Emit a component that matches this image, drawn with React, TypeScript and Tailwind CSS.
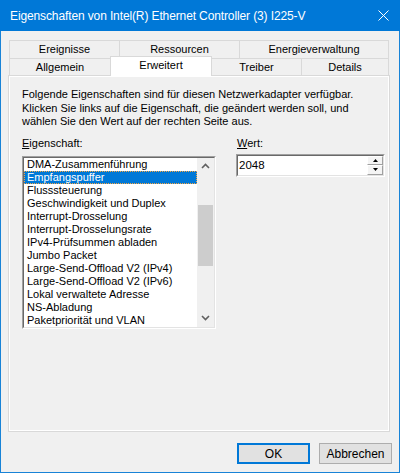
const properties = [
  'DMA-Zusammenführung',
  'Empfangspuffer',
  'Flusssteuerung',
  'Geschwindigkeit und Duplex',
  'Interrupt-Drosselung',
  'Interrupt-Drosselungsrate',
  'IPv4-Prüfsummen abladen',
  'Jumbo Packet',
  'Large-Send-Offload V2 (IPv4)',
  'Large-Send-Offload V2 (IPv6)',
  'Lokal verwaltete Adresse',
  'NS-Abladung',
  'Paketpriorität und VLAN',
];

function Chevron({ down }: { down?: boolean }) {
  return (
    <svg width="9" height="6" viewBox="0 0 9 6">
      <path
        d={down ? 'M1 1 L4.5 4.5 L8 1' : 'M1 5 L4.5 1.5 L8 5'}
        fill="none"
        stroke="#606060"
        strokeWidth="1.6"
      />
    </svg>
  );
}

function SpinArrow({ down }: { down?: boolean }) {
  return (
    <svg width="5" height="3" viewBox="0 0 5 3">
      <path d={down ? 'M0 0 H5 L2.5 3 Z' : 'M0 3 H5 L2.5 0 Z'} fill="#000" />
    </svg>
  );
}

export default function App() {
  const selected = 1;

  return (
    <div className="w-[400px] h-[473px] flex flex-col font-['Liberation_Sans',Arial,sans-serif] text-[11px] text-black select-none">
      {/* title bar */}
      <div className="h-[31px] shrink-0 bg-[#0078d7] flex items-center pl-[10px] pr-[10px] text-white text-[12px]">
        <span className="flex-1 tracking-[-0.12px]">Eigenschaften von Intel(R) Ethernet Controller (3) I225-V</span>
        <svg width="11" height="11" viewBox="0 0 11 11" className="mr-[1px]">
          <path d="M0.5 0.5 L10.5 10.5 M10.5 0.5 L0.5 10.5" stroke="#fff" strokeWidth="1" />
        </svg>
      </div>

      <div className="flex-1 flex flex-col bg-[#f0f0f0] border-x border-b border-[#1883d7] pl-[7px] pt-[9px]">
        {/* tabs */}
        <div className="ml-[1px] w-[380px]">
          <div className="flex h-[18px]">
            <div className="w-[110px] border-t border-l border-[#d9d9d9] flex items-center justify-center">Ereignisse</div>
            <div className="w-[120px] border-t border-l border-[#d9d9d9] flex items-center justify-center">Ressourcen</div>
            <div className="w-[150px] border-t border-x border-[#d9d9d9] flex items-center justify-center">Energieverwaltung</div>
          </div>
          <div className="flex h-[17px]">
            <div className="w-[101px] border-t border-l border-[#d9d9d9] flex items-center justify-center">Allgemein</div>
            <div className="relative z-10 w-[102px] h-[20px] -mt-[2px] bg-white border-t border-x border-[#d9d9d9] flex items-center justify-center pb-[2px]">
              Erweitert
            </div>
            <div className="w-[89px] border-t border-[#d9d9d9] flex items-center justify-center">Treiber</div>
            <div className="w-[88px] border-t border-x border-[#d9d9d9] flex items-center justify-center">Details</div>
          </div>
        </div>

        {/* page */}
        <div className="w-[382px] h-[357px] border border-[#d9d9d9]">
          <div className="h-full border border-white pl-[12px] pt-[11px]">
            <div className="leading-[13.5px]">
              <div>Folgende Eigenschaften sind für diesen Netzwerkadapter verfügbar.</div>
              <div>Klicken Sie links auf die Eigenschaft, die geändert werden soll, und</div>
              <div>wählen Sie den Wert auf der rechten Seite aus.</div>
            </div>

            <div className="flex mt-[8px]">
              <div className="w-[194px]">
                <div className="leading-[13px]">
                  <span className="underline underline-offset-[1px]">E</span>igenschaft:
                </div>
                <div className="mt-[6px] h-[173px] border border-t-[#a0a0a0] border-l-[#a0a0a0] border-r-white border-b-white">
                  <div className="h-full flex bg-white border border-t-[#696969] border-l-[#696969] border-r-[#e3e3e3] border-b-[#e3e3e3]">
                    <div className="flex-1 overflow-hidden">
                      {properties.map((p, i) => (
                        <div
                          key={p}
                          className={
                            i === selected
                              ? 'h-[13px] leading-[11px] pl-[2px] bg-[#0078d7] text-white border border-dotted border-[#f7a641]'
                              : 'h-[13px] leading-[13px] pl-[3px] whitespace-nowrap'
                          }
                        >
                          {p}
                        </div>
                      ))}
                    </div>
                    <div className="w-[17px] flex flex-col bg-[#f0f0f0]">
                      <div className="h-[17px] flex items-center justify-center">
                        <Chevron />
                      </div>
                      <div className="flex-1 pt-[30px] px-[1px]">
                        <div className="h-[61px] bg-[#cdcdcd]" />
                      </div>
                      <div className="h-[17px] flex items-center justify-center">
                        <Chevron down />
                      </div>
                    </div>
                  </div>
                </div>
              </div>

              <div className="ml-[20px] w-[149px]">
                <div className="leading-[13px] pl-[1px]">
                  <span className="underline underline-offset-[1px]">W</span>ert:
                </div>
                <div className="mt-[4px] h-[23px] border border-t-[#a0a0a0] border-l-[#a0a0a0] border-r-white border-b-white">
                  <div className="h-full flex bg-white border border-t-[#696969] border-l-[#696969] border-r-[#e3e3e3] border-b-[#e3e3e3]">
                    <div className="flex-1 pl-[1px] leading-[19px] text-[11.5px]">2048</div>
                    <div className="w-[16px] flex flex-col">
                      <div className="flex-1 flex items-center justify-center bg-[#f4f4f4] border border-t-white border-l-white border-r-[#a0a0a0] border-b-[#a0a0a0]">
                        <SpinArrow />
                      </div>
                      <div className="flex-1 flex items-center justify-center bg-[#f4f4f4] border border-t-white border-l-white border-r-[#a0a0a0] border-b-[#a0a0a0]">
                        <SpinArrow down />
                      </div>
                    </div>
                  </div>
                </div>
              </div>
            </div>
          </div>
        </div>

        {/* buttons */}
        <div className="flex justify-end gap-[9px] pr-[7px] mt-[11px]">
          <button className="w-[73px] h-[21px] bg-[#e1e1e1] border-2 border-[#0078d7] text-[12px] leading-none">OK</button>
          <button className="w-[73px] h-[21px] bg-[#e1e1e1] border border-[#adadad] text-[12px] leading-none">Abbrechen</button>
        </div>
      </div>
    </div>
  );
}
